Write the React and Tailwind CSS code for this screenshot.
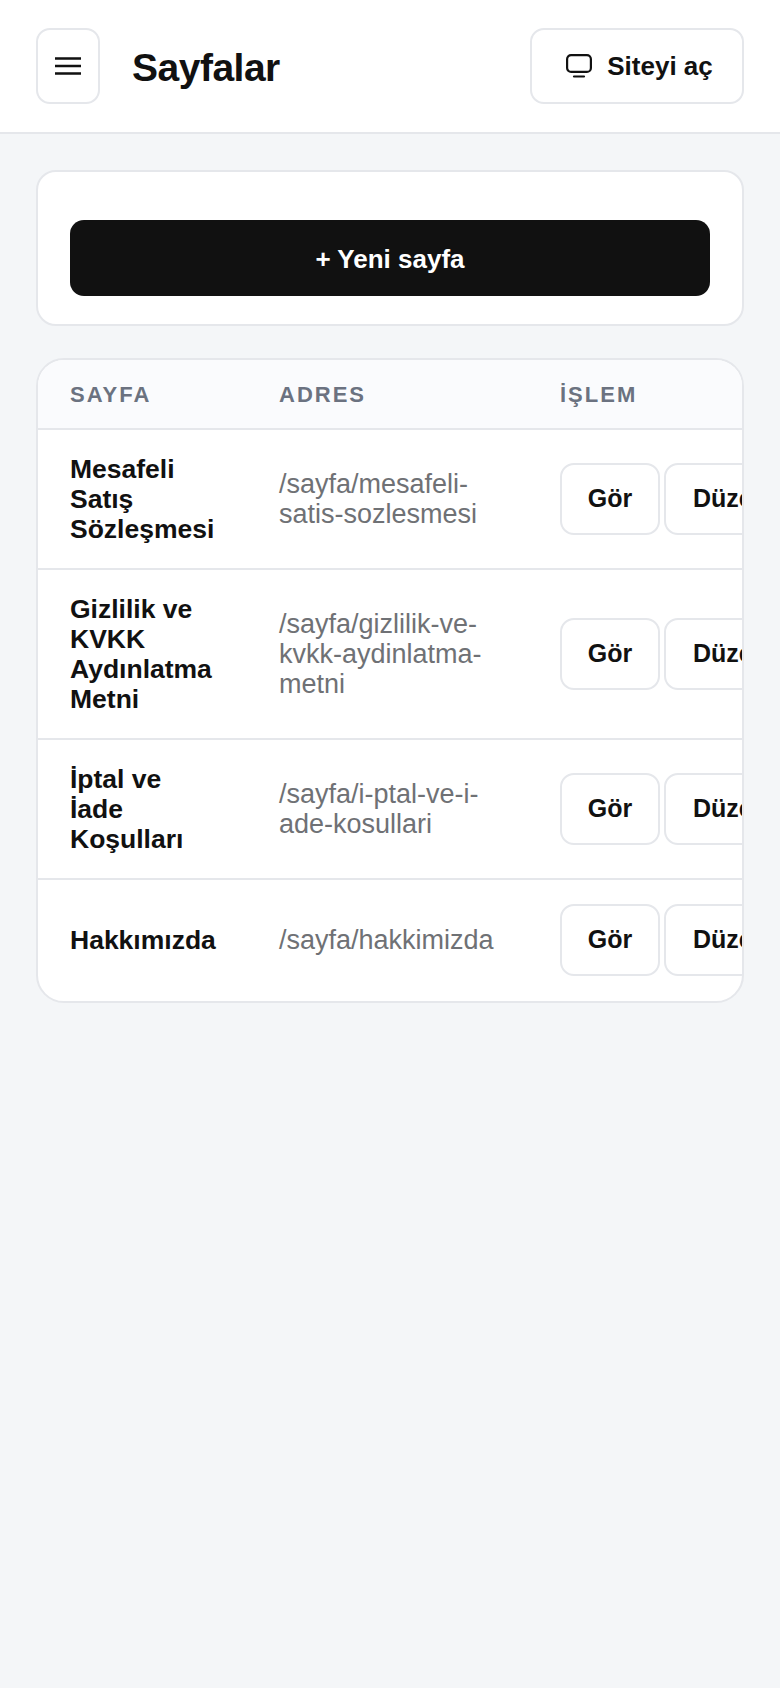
const pages = [
  { title: 'Mesafeli Satış Sözleşmesi', path: '/sayfa/mesafeli-satis-sozlesmesi' },
  { title: 'Gizlilik ve KVKK Aydınlatma Metni', path: '/sayfa/gizlilik-ve-kvkk-aydinlatma-metni' },
  { title: 'İptal ve İade Koşulları', path: '/sayfa/i-ptal-ve-i-ade-kosullari' },
  { title: 'Hakkımızda', path: '/sayfa/hakkimizda' },
]

const headCell = 'px-0 pt-[22px] pb-[20px] text-left text-[22px] leading-[26px] font-bold uppercase tracking-[2px] text-[#6b7280]'

function MenuIcon() {
  return (
    <svg width="28" height="18" viewBox="0 0 28 18" fill="none" stroke="#111111" strokeWidth="2.4">
      <path d="M1 1.5h26M1 9h26M1 16.5h26" />
    </svg>
  )
}

function ScreenIcon() {
  return (
    <svg width="26" height="24" viewBox="0 0 26 24" fill="none" stroke="#111111" strokeWidth="2.2" strokeLinecap="round">
      <rect x="1.1" y="1.1" width="23.8" height="16.8" rx="4" />
      <path d="M8 22.5h10" />
    </svg>
  )
}

function RowButton({ children, className = '' }) {
  return (
    <button className={`h-[72px] shrink-0 rounded-[14px] border-2 border-[#e5e7eb] bg-white text-[25px] font-bold text-[#111111] ${className}`}>
      {children}
    </button>
  )
}

export default function App() {
  return (
    <div className="min-h-[1688px] bg-[#f4f6f8] font-['Liberation_Sans',Arial,sans-serif] text-[#111111]">
      <header className="flex h-[134px] items-center justify-between border-b-2 border-[#e5e7eb] bg-white px-9">
        <div className="flex items-center gap-8">
          <button className="flex h-[76px] w-16 items-center justify-center rounded-[14px] border-2 border-[#e5e7eb] bg-white">
            <MenuIcon />
          </button>
          <h1 className="pt-0.5 text-[39px] leading-none font-bold tracking-[-0.5px]">Sayfalar</h1>
        </div>
        <button className="flex h-[76px] w-[214px] items-center justify-center gap-[15px] rounded-[14px] border-2 border-[#e5e7eb] bg-white pl-[5px] text-[26px] font-bold">
          <ScreenIcon />
          Siteyi aç
        </button>
      </header>

      <main className="flex flex-col gap-8 px-9 pt-9">
        <section className="rounded-[20px] border-2 border-[#e5e7eb] bg-white px-8 pt-[48px] pb-[28px]">
          <button className="h-[76px] w-full rounded-[14px] bg-[#111111] pt-0.5 text-[26px] font-bold text-white">+ Yeni sayfa</button>
        </section>

        <section className="overflow-hidden rounded-[28px] border-2 border-[#e5e7eb] bg-white pb-px">
          <table className="w-[900px] table-fixed border-collapse">
            <colgroup>
              <col className="w-[241px]" />
              <col className="w-[281px]" />
              <col />
            </colgroup>
            <thead className="bg-[#fafbfd]">
              <tr className="border-b-2 border-[#e5e7eb]">
                <th className={`${headCell} pl-8`}>Sayfa</th>
                <th className={headCell}>Adres</th>
                <th className={headCell}>İşlem</th>
              </tr>
            </thead>
            <tbody>
              {pages.map((page, index) => (
                <tr key={page.path} className={index < pages.length - 1 ? 'border-b-2 border-[#e5e7eb]' : ''}>
                  <td className="py-6 pr-[60px] pl-8 align-middle text-[26.5px] leading-[30px] font-bold">{page.title}</td>
                  <td className="py-6 pr-10 align-middle text-[27px] leading-[30px] break-words text-[#6f7175]">{page.path}</td>
                  <td className="py-6 align-middle">
                    <div className="flex gap-1">
                      <RowButton className="w-[100px]">Gör</RowButton>
                      <RowButton className="px-[27px]">Düzenle</RowButton>
                    </div>
                  </td>
                </tr>
              ))}
            </tbody>
          </table>
        </section>
      </main>
    </div>
  )
}
